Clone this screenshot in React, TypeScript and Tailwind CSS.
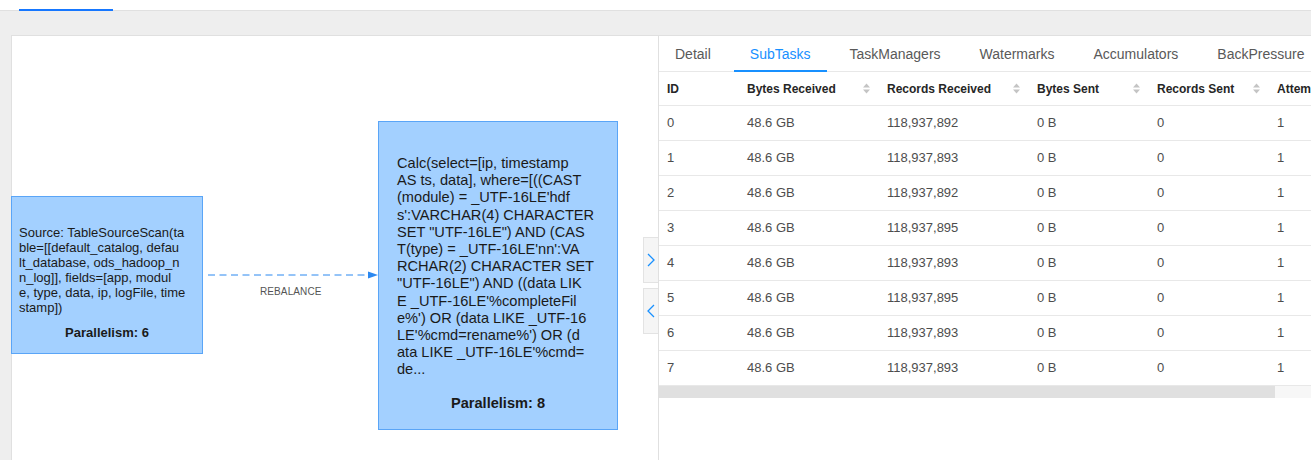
import React from "react";

const sourceLines = [
  "Source: TableSourceScan(ta",
  "ble=[[default_catalog, defau",
  "lt_database, ods_hadoop_n",
  "n_log]], fields=[app, modul",
  "e, type, data, ip, logFile, time",
  "stamp])",
];

const calcLines = [
  "Calc(select=[ip, timestamp",
  "AS ts, data], where=[((CAST",
  "(module) = _UTF-16LE'hdf",
  "s':VARCHAR(4) CHARACTER",
  'SET "UTF-16LE") AND (CAS',
  "T(type) = _UTF-16LE'nn':VA",
  "RCHAR(2) CHARACTER SET",
  '"UTF-16LE") AND ((data LIK',
  "E _UTF-16LE'%completeFil",
  "e%') OR (data LIKE _UTF-16",
  "LE'%cmd=rename%') OR (d",
  "ata LIKE _UTF-16LE'%cmd=",
  "de...",
];

const tabs = ["Detail", "SubTasks", "TaskManagers", "Watermarks", "Accumulators", "BackPressure"];

const rows = [
  ["0", "48.6 GB", "118,937,892", "0 B", "0", "1"],
  ["1", "48.6 GB", "118,937,893", "0 B", "0", "1"],
  ["2", "48.6 GB", "118,937,892", "0 B", "0", "1"],
  ["3", "48.6 GB", "118,937,895", "0 B", "0", "1"],
  ["4", "48.6 GB", "118,937,893", "0 B", "0", "1"],
  ["5", "48.6 GB", "118,937,895", "0 B", "0", "1"],
  ["6", "48.6 GB", "118,937,893", "0 B", "0", "1"],
  ["7", "48.6 GB", "118,937,893", "0 B", "0", "1"],
];

const cols = [
  { label: "ID", w: "w-[80px]", sort: false },
  { label: "Bytes Received", w: "w-[140px]", sort: true },
  { label: "Records Received", w: "w-[150px]", sort: true },
  { label: "Bytes Sent", w: "w-[120px]", sort: true },
  { label: "Records Sent", w: "w-[120px]", sort: true },
  { label: "Attempt", w: "w-[120px]", sort: true },
];

function SortIcon() {
  return (
    <svg width="7" height="11" viewBox="0 0 7 11" className="shrink-0">
      <polygon points="3.5,0.5 7,4.5 0,4.5" fill="#c4c4c4" />
      <polygon points="0,6.5 7,6.5 3.5,10.5" fill="#c4c4c4" />
    </svg>
  );
}

export default function App() {
  return (
    <div
      className="w-[1311px] h-[460px] overflow-hidden bg-[#eeeeee]"
      style={{ fontFamily: '"Liberation Sans", Arial, sans-serif' }}
    >
      {/* top bar */}
      <div className="relative h-[11px] bg-white border-b border-[#e0e0e0]">
        <div className="absolute left-[19px] bottom-[-1px] w-[94px] h-[2px] bg-[#1677ff]" />
      </div>

      <div className="pt-[24px]">
        <div className="ml-[11px] flex h-[425px] bg-white border-l border-t border-[#e0e0e0]">
          {/* graph canvas */}
          <div className="relative w-[646px] shrink-0">
            {/* source node */}
            <div className="absolute left-[-1px] top-[160px] w-[192px] h-[158px] bg-[#a3d0ff] border border-[#5aa5f7] pl-[7px] pt-[28px] text-[13px] leading-[15px] text-[#1a1a1a]">
              {sourceLines.map((l, i) => (
                <div key={i} className="whitespace-nowrap">{l}</div>
              ))}
              <div className="mt-[10px] text-center font-bold pr-[7px]">Parallelism: 6</div>
            </div>

            {/* edge */}
            <svg className="absolute left-[196px] top-[233px]" width="175" height="12" viewBox="0 0 175 12">
              <line x1="0" y1="6" x2="162" y2="6" stroke="#2b88f0" strokeWidth="1" strokeDasharray="7 4.5" />
              <polygon points="160,2.5 170,6 160,9.5" fill="#2b88f0" />
            </svg>
            <div className="absolute left-[248px] top-[250px] text-[10px] leading-[12px] text-[#555] tracking-[0.1px]">
              REBALANCE
            </div>

            {/* calc node */}
            <div className="absolute left-[366px] top-[85px] w-[240px] h-[309px] bg-[#a3d0ff] border border-[#5aa5f7] pl-[18px] pt-[33px] text-[14.6px] leading-[17.2px] text-[#1a1a1a]">
              {calcLines.map((l, i) => (
                <div key={i} className="whitespace-nowrap">{l}</div>
              ))}
              <div className="mt-[16px] text-center font-bold pr-[18px]">Parallelism: 8</div>
            </div>

            {/* collapse buttons */}
            <div className="absolute left-[631px] top-[201px] w-[15px] h-[46px] bg-[#f5f5f5] border-l border-t border-b border-[#e3e3e3] flex items-center justify-center">
              <svg width="8" height="14" viewBox="0 0 8 14">
                <polyline points="1,1 7,7 1,13" fill="none" stroke="#1890ff" strokeWidth="1.3" />
              </svg>
            </div>
            <div className="absolute left-[631px] top-[252px] w-[15px] h-[46px] bg-[#f5f5f5] border-l border-t border-b border-[#e3e3e3] flex items-center justify-center">
              <svg width="8" height="14" viewBox="0 0 8 14">
                <polyline points="7,1 1,7 7,13" fill="none" stroke="#1890ff" strokeWidth="1.3" />
              </svg>
            </div>
          </div>

          {/* right panel */}
          <div className="flex-1 min-w-0 border-l border-[#e0e0e0] overflow-hidden">
            <div className="flex h-[36px] gap-[7px] border-b border-[#e8e8e8] whitespace-nowrap">
              {tabs.map((t) => {
                const active = t === "SubTasks";
                return (
                  <div
                    key={t}
                    className={
                      active
                        ? "h-[36px] px-4 pt-[3px] flex items-center border-b-2 border-[#1890ff] text-[14px] text-[#1890ff] font-medium shrink-0"
                        : "h-[36px] px-4 pt-[3px] flex items-center border-b-2 border-transparent text-[14px] text-[#595959] shrink-0"
                    }
                  >
                    {t}
                  </div>
                );
              })}
            </div>

            <div className="w-[1000px]">
              <div className="flex h-[34px] border-b border-[#e8e8e8]">
                {cols.map((c) => (
                  <div
                    key={c.label}
                    className={`${c.w} shrink-0 flex items-center justify-between pl-2 pr-[9px] text-[12px] font-bold text-[#262626] whitespace-nowrap`}
                  >
                    <span>{c.label}</span>
                    {c.sort && <SortIcon />}
                  </div>
                ))}
              </div>
              {rows.map((r) => (
                <div key={r[0]} className="flex h-[35px] border-b border-[#e8e8e8]">
                  {r.map((v, i) => (
                    <div
                      key={i}
                      className={`${cols[i].w} shrink-0 flex items-center pl-2 text-[13px] text-[#4d4d4d] whitespace-nowrap`}
                    >
                      {v}
                    </div>
                  ))}
                </div>
              ))}
            </div>
            {/* horizontal scrollbar */}
            <div className="flex h-[12px] bg-[#f7f7f7]">
              <div className="w-[616px] h-full bg-[#e0e0e0]" />
            </div>
          </div>
        </div>
      </div>
    </div>
  );
}
